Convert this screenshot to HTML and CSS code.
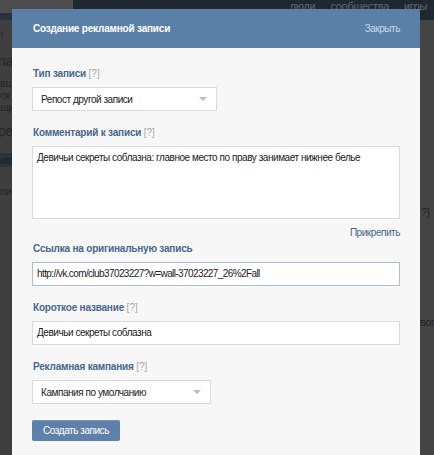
FILE: index.html
```html
<!DOCTYPE html>
<html>
<head>
<meta charset="utf-8">
<link rel="stylesheet" href="styles.css">
</head>
<body>
<div class="page">
  <div class="topbar">
    <div class="topbar-left"><span class="tb-stripe"></span></div>
    <div class="topbar-nav"><span>люди</span><span>сообщества</span><span>игры</span></div>
  </div>
  <div class="bg-content">
    <div class="bg-left">
      <div class="bg-l1">т</div>
      <div class="bg-l2">па</div>
      <div class="bg-l3">вщ<br>ок<br>щи</div>
      <div class="bg-l4">ре</div>
      <div class="bg-l5">ив</div>
      <div class="bg-l6">пи</div>
    </div>
    <div class="bg-right">
      <div class="bg-r1">?]</div>
      <div class="bg-r2">воп</div>
    </div>
  </div>
  <div class="modal">
    <div class="modal-head">
      <div class="modal-title">Создание рекламной записи</div>
      <div class="modal-close">Закрыть</div>
    </div>
    <div class="modal-body">
      <div class="field">
        <div class="label">Тип записи <span class="hint">[?]</span></div>
        <div class="select select-type"><span>Репост другой записи</span><span class="arrow"></span></div>
      </div>
      <div class="field field-comment">
        <div class="label">Комментарий к записи <span class="hint">[?]</span></div>
        <div class="textarea">Девичьи секреты соблазна: главное место по праву занимает нижнее белье</div>
        <div class="attach">Прикрепить</div>
      </div>
      <div class="field">
        <div class="label">Ссылка на оригинальную запись</div>
        <div class="input input-focus url">http://vk.com/club37023227?w=wall-37023227_26%2Fall</div>
      </div>
      <div class="field">
        <div class="label">Короткое название <span class="hint">[?]</span></div>
        <div class="input">Девичьи секреты соблазна</div>
      </div>
      <div class="field">
        <div class="label">Рекламная кампания <span class="hint">[?]</span></div>
        <div class="select select-camp"><span>Кампания по умолчанию</span><span class="arrow"></span></div>
      </div>
      <div class="button">Создать запись</div>
    </div>
  </div>
</div>
</body>
</html>
```
FILE: styles.css
```css
* { box-sizing: border-box; }
html, body { margin: 0; padding: 0; }
body {
  width: 434px;
  height: 455px;
  overflow: hidden;
  background: #414141;
  font-family: "Liberation Sans", Arial, sans-serif;
  font-size: 10px;
  letter-spacing: -0.45px;
}
.page { position: relative; width: 434px; height: 455px; }
.topbar { display: flex; height: 20px; }
.topbar-left {
  width: 73px;
  background: #4d4d4d;
  display: flex;
  flex-direction: column;
  justify-content: flex-end;
}
.tb-stripe { height: 7px; background: #2b323b; }
.topbar-nav {
  flex: 1;
  background: #1f2731;
  display: flex;
  justify-content: flex-end;
  gap: 15px;
  padding: 0 7px 0 0;
  color: #5d6875;
  font-size: 11px;
  letter-spacing: -0.3px;
  line-height: 12px;
}
.bg-content {
  display: flex;
  justify-content: space-between;
  height: 435px;
  color: #252525;
  font-size: 11px;
}
.bg-left { width: 12px; overflow: hidden; background: #3f3f3f; white-space: nowrap; }
.bg-right { width: 14px; overflow: hidden; background: #444; white-space: nowrap; }
.bg-l1 { margin-top: 10px; font-size: 8px; }
.bg-l2 { margin-top: 14px; font-size: 14px; margin-left: -2px; }
.bg-l3 { margin-top: 8px; line-height: 12px; }
.bg-l4 { margin-top: 10px; font-size: 14px; margin-left: -2px; }
.bg-l5 { margin-top: 14px; background: #2a3440; color: #1a1f25; height: 14px; line-height: 14px; }
.bg-l6 { margin-top: 18px; }
.bg-r1 { margin-top: 186px; margin-left: 1px; }
.bg-r2 { margin-top: 98px; margin-left: 0; }
.modal {
  position: absolute;
  left: 12px;
  top: 9px;
  width: 408px;
  height: 460px;
  background: #f7f7f7;
}
.modal-head {
  height: 39px;
  background: #5b80a8;
  display: flex;
  align-items: center;
  justify-content: space-between;
  padding: 0 20px 0 21px;
}
.modal-title { color: #fff; font-weight: bold; font-size: 10px; letter-spacing: -0.2px; }
.modal-close { color: #c7d8eb; }
.modal-body { padding: 19px 20px 0 20px; }
.field { margin-bottom: 15px; }
.field-comment { margin-bottom: 2px; }
.label {
  color: #45688e;
  font-weight: bold;
  letter-spacing: -0.2px;
  line-height: 14px;
  margin-bottom: 6px;
  padding-left: 1px;
}
.hint { color: #a8a8a8; font-weight: normal; letter-spacing: 0; }
.select, .input, .textarea {
  background: #fff;
  border: 1px solid #dadada;
  color: #222;
}
.select {
  height: 24px;
  display: flex;
  align-items: center;
  justify-content: space-between;
  padding: 0 9px 0 8px;
}
.select-type { width: 185px; }
.select-camp { width: 179px; }
.arrow {
  width: 0; height: 0;
  border-left: 4px solid transparent;
  border-right: 4px solid transparent;
  border-top: 4px solid #bdbdbd;
}
.textarea {
  height: 73px;
  padding: 4px 4px;
  line-height: 14px;
}
.attach {
  text-align: right;
  color: #45688e;
  margin-top: 7px;
  line-height: 14px;
}
.input {
  height: 24px;
  line-height: 22px;
  padding: 0 4px;
}
.url { letter-spacing: -0.6px; }
.input-focus { border-color: #a6bfdc; }
.button {
  display: inline-block;
  margin-top: 1px;
  width: 88px;
  height: 21px;
  line-height: 21px;
  text-align: center;
  color: #fff;
  background: #5d81a8;
  border-radius: 2px;
  box-shadow: inset 0 1px 0 #7193b8;
}
```
